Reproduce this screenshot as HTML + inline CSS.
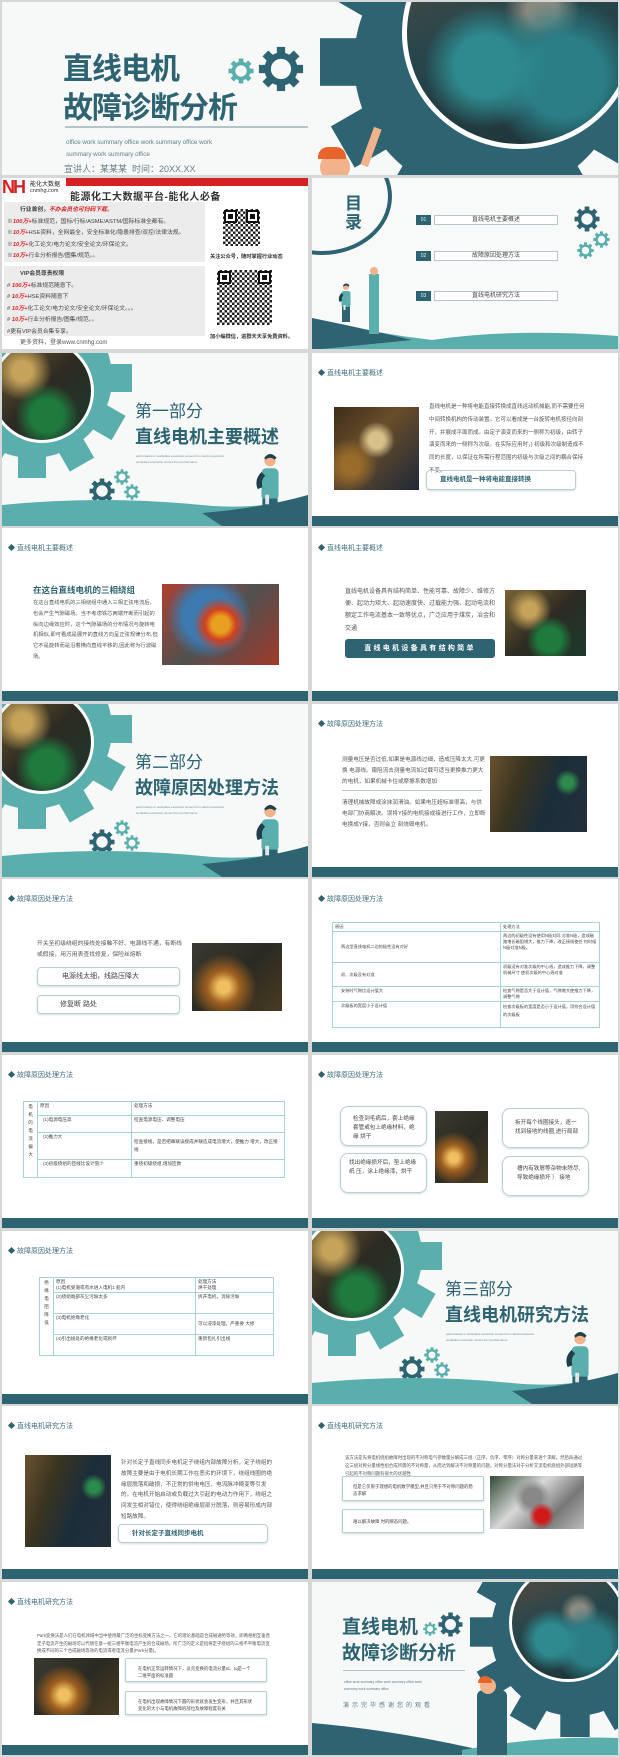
<!DOCTYPE html>
<html><head><meta charset="utf-8">
<style>
*{margin:0;padding:0;box-sizing:border-box}
body{width:620px;height:1757px;background:#d6d8d8;position:relative;overflow:hidden;font-family:"Liberation Sans","Noto Sans CJK SC",sans-serif;color:#444}
.s{position:absolute;width:306px;height:173px;background:#fff;overflow:hidden}
.L{left:2px}.R{left:312px}
.a{position:absolute}
.bar{position:absolute;left:0;right:0;bottom:0;height:10px;background:#2e6372}
.hd{position:absolute;left:7px;top:15px;font-size:7px;color:#3e6f7c}
.hd:before{content:"";display:inline-block;width:5px;height:5px;background:#2e6372;transform:rotate(45deg);margin-right:3px;vertical-align:0}
.t{position:absolute;font-size:5.6px;line-height:12px;color:#555}
.ph{position:absolute}
.btn{position:absolute;border:1px solid #b9cfd2;border-radius:4px;box-shadow:0 1px 2px #cfdcdd;font-size:7px;color:#444}
table{border-collapse:collapse;font-size:5px;color:#444}
td{border:1px solid #a9d3d6;vertical-align:top;padding:1px 2px}
.p1{background:radial-gradient(circle at 55% 75%,#1f7a3e 0 18%,transparent 35%),radial-gradient(circle at 30% 30%,#c6a35a 0 10%,transparent 30%),linear-gradient(135deg,#7a6433,#2c2a22 50%,#1c3a2d)}
.pteal{background:radial-gradient(circle at 35% 65%,#2e8a8f 0 15%,transparent 30%),radial-gradient(circle at 70% 70%,#2b7e86 0 18%,transparent 35%),radial-gradient(circle at 60% 40%,#8a8a80 0 8%,transparent 20%),linear-gradient(160deg,#5a4a3e,#27464c 45%,#1d3236)}
.pbar{background:radial-gradient(circle at 50% 40%,#d8c08a 0 12%,transparent 28%),radial-gradient(circle at 20% 70%,#9a6c2a 0 10%,transparent 30%),linear-gradient(135deg,#3b2d1a,#6a4e2a 40%,#1f2838)}
.pcopper{background:radial-gradient(circle at 80% 35%,#2c8a4c 0 6%,transparent 14%),linear-gradient(110deg,#6a5230,#3a3420 30%,#1c2d3a 60%,#22303a)}
.pspark{background:radial-gradient(circle at 35% 65%,#f0c060 0 8%,#a06020 22%,transparent 45%),linear-gradient(135deg,#3a3a30,#2a2a22 50%,#4a3a22)}
.pmotor{background:radial-gradient(circle at 50% 50%,#e8a020 0 12%,#d04020 22%,transparent 38%),radial-gradient(circle at 40% 40%,#3c7ab0 0 30%,transparent 50%),linear-gradient(135deg,#b04030,#505050 50%,#a03a2a)}
.pgear{background:radial-gradient(circle at 55% 75%,#d01a1a 0 10%,transparent 20%),radial-gradient(circle at 45% 40%,#888 0 15%,transparent 30%),linear-gradient(135deg,#2f4a34,#d8d8d8 40%,#777 70%,#bbb)}
.qr{position:absolute;background:repeating-conic-gradient(#222 0 25%,#fff 0 50%) 0 0/5px 5px,#fff}
.qr:before,.qr:after{content:"";position:absolute;width:9px;height:9px;border:2px solid #111;background:#fff;box-shadow:inset 0 0 0 2px #fff,inset 0 0 0 5px #111;top:1px;left:1px}
.qr:after{left:auto;right:1px}
.red{color:#d81e1e;font-weight:bold;font-style:italic}
</style></head><body>
<svg width="0" height="0" style="position:absolute">
<defs>
<symbol id="g" viewBox="-50 -50 100 100"><circle r="29" fill="none" stroke="currentColor" stroke-width="14"/><g fill="currentColor"><rect x="-9" y="-48" width="18" height="14"/><rect x="-9" y="-48" width="18" height="14" transform="rotate(45)"/><rect x="-9" y="-48" width="18" height="14" transform="rotate(90)"/><rect x="-9" y="-48" width="18" height="14" transform="rotate(135)"/><rect x="-9" y="-48" width="18" height="14" transform="rotate(180)"/><rect x="-9" y="-48" width="18" height="14" transform="rotate(225)"/><rect x="-9" y="-48" width="18" height="14" transform="rotate(270)"/><rect x="-9" y="-48" width="18" height="14" transform="rotate(315)"/></g></symbol>
<symbol id="G" viewBox="-50 -50 100 100"><circle r="40" fill="currentColor"/><g fill="currentColor"><rect x="-7" y="-50" width="14" height="14"/><rect x="-7" y="-50" width="14" height="14" transform="rotate(30)"/><rect x="-7" y="-50" width="14" height="14" transform="rotate(60)"/><rect x="-7" y="-50" width="14" height="14" transform="rotate(90)"/><rect x="-7" y="-50" width="14" height="14" transform="rotate(120)"/><rect x="-7" y="-50" width="14" height="14" transform="rotate(150)"/><rect x="-7" y="-50" width="14" height="14" transform="rotate(180)"/><rect x="-7" y="-50" width="14" height="14" transform="rotate(210)"/><rect x="-7" y="-50" width="14" height="14" transform="rotate(240)"/><rect x="-7" y="-50" width="14" height="14" transform="rotate(270)"/><rect x="-7" y="-50" width="14" height="14" transform="rotate(300)"/><rect x="-7" y="-50" width="14" height="14" transform="rotate(330)"/></g></symbol>
<symbol id="man" viewBox="0 0 40 80"><circle cx="20" cy="8" r="6" fill="#f2b28a"/><path d="M14 5 q6-8 13 0 l-2 2 q-5-4-10 0z" fill="#1f3f4a"/><rect x="11" y="16" width="18" height="34" rx="5" fill="#5aafad"/><path d="M11 20 q-8 8-4 18 l5-2 q-2-8 3-12z" fill="#1f3f4a"/><rect x="12" y="48" width="16" height="30" fill="#2e6372"/><rect x="15" y="44" width="4" height="10" fill="#e7e7e7"/></symbol>
</defs></svg>

<!-- TOP TITLE SLIDE -->
<div class="s" style="left:2px;top:2px;width:616px;height:173px;background:#f7f9f9">
 <svg class="a" style="left:318px;top:-110px" width="340" height="340"><use href="#G" width="340" height="340" color="#2e6372"/></svg>
 <div class="a pteal" style="left:400px;top:-85px;width:235px;height:232px;border-radius:50%;border:5px solid #fff"></div>
 <div class="a" style="left:61px;top:42px;font-size:30px;font-weight:bold;color:#2e6372;letter-spacing:-1px">直线电机</div>
 <svg class="a" style="left:226px;top:56px" width="26" height="26"><use href="#g" width="26" height="26" color="#5aafad"/></svg>
 <svg class="a" style="left:256px;top:44px" width="46" height="46"><use href="#g" width="46" height="46" color="#2e6372"/></svg>
 <div class="a" style="left:61px;top:81px;font-size:30px;font-weight:bold;color:#2e6372;letter-spacing:-1px">故障诊断分析</div>
 <div class="a" style="left:63px;top:124px;width:243px;height:2px;background:#b5c4c8"></div>
 <div class="a" style="left:64px;top:135px;font-size:6.2px;line-height:12px;color:#5d7f88;width:240px">office work summary office work summary office work<br>summary work summary office</div>
 <div class="a" style="left:62px;top:160px;font-size:9px;color:#6a7f86">宣讲人：某某某&nbsp;&nbsp;时间：20XX.XX</div>
 <div class="a" style="left:318px;top:150px;width:30px;height:30px;border-radius:50%;background:#f2b28a"></div>
 <div class="a" style="left:316px;top:145px;width:28px;height:12px;border-radius:10px 10px 0 0;background:#e8642a"></div>
 <div class="a" style="left:365px;top:125px;width:8px;height:40px;background:#f2b28a;transform:rotate(20deg)"></div>
</div>

<!-- ROW 2 LEFT: AD -->
<div class="s L" style="top:178px;height:171px">
 <div class="a" style="left:64px;top:0;right:0;height:8px;background:#d42121"></div>
 <div class="a" style="left:0;top:0;width:24px;height:19px;color:#d42121;font-weight:bold;font-size:18px;line-height:19px;letter-spacing:-2px">NH</div>
 <div class="a" style="left:28px;top:1px;font-size:6px;color:#222">能化大数据</div>
 <div class="a" style="left:28px;top:10px;font-size:5.5px;color:#333">cnmhg.com</div>
 <div class="a" style="left:68px;top:10px;font-size:10px;font-weight:bold;color:#333;letter-spacing:.5px">能源化工大数据平台-能化人必备</div>
 <div class="a" style="left:2px;top:24px;width:201px;height:60px;background:#ececec;font-size:5.8px;line-height:11.5px;padding:3px 3px;color:#444">
  <div style="padding-left:13px;font-weight:bold">行业首创，<span class="red">不办会员也可扫码下载。</span></div>
  <div>※<span class="red">100万+</span>标准规范，国标/行标/ASME/ASTM/国际标准全都有。</div>
  <div>※<span class="red">10万+</span>HSE资料，全网最全，安全标准化/隐患排查/双控/法律法规。</div>
  <div>※<span class="red">10万+</span>化工论文/电力论文/安全论文/环保论文。</div>
  <div>※<span class="red">10万+</span>行业分析报告/图集/规范。。</div>
 </div>
 <div class="a" style="left:2px;top:88px;width:201px;height:70px;background:#ececec;font-size:5.8px;line-height:11.5px;padding:3px 3px;color:#444">
  <div style="padding-left:13px;font-weight:bold">VIP会员尊贵权限</div>
  <div># <span class="red">100万+</span>标准规范随意下。</div>
  <div># <span class="red">10万+</span>HSE资料随意下</div>
  <div># <span class="red">10万+</span>化工论文/电力论文/安全论文/环保论文。。。</div>
  <div># <span class="red">10万+</span>行业分析报告/图集/规范。。</div>
  <div>#更有VIP会员合集专享。</div>
 </div>
 <div class="a" style="left:18px;top:159px;font-size:6px;color:#555">更多资料，登录www.cnmhg.com</div>
 <div class="qr" style="left:221px;top:31px;width:37px;height:37px"></div>
 <div class="a" style="left:208px;top:75px;font-size:5.2px;font-weight:bold;color:#333">关注公众号，随时掌握行业动态</div>
 <div class="qr" style="left:215px;top:92px;width:55px;height:55px"></div>
 <div class="a" style="left:208px;top:155px;font-size:5.2px;font-weight:bold;color:#333">加小编微信，进群天天享免费资料。</div>
</div>

<!-- ROW 2 RIGHT: TOC -->
<div class="s R" style="top:178px;height:171px;background:#f8fafa">
 <div class="a" style="left:-60px;top:-40px;width:140px;height:117px;border-radius:50%;border:4px solid #2e6372"></div>
 <div class="a" style="left:33px;top:16px;font-size:17px;font-weight:bold;color:#2e6372;line-height:19px;width:20px">目录</div>
 <div class="a" style="left:104px;top:37px;width:15px;height:10px;background:#2e6372;color:#cfe;font-size:5px;text-align:center;line-height:10px">01</div>
 <div class="a" style="left:122px;top:37px;width:124px;height:10px;border:1px solid #b5c4c8;background:#fff;font-size:6px;text-align:center;line-height:9px">直线电机主要概述</div>
 <div class="a" style="left:104px;top:73px;width:15px;height:10px;background:#2e6372;color:#cfe;font-size:5px;text-align:center;line-height:10px">02</div>
 <div class="a" style="left:122px;top:73px;width:124px;height:10px;border:1px solid #b5c4c8;background:#fff;font-size:6px;text-align:center;line-height:9px">故障原因处理方法</div>
 <div class="a" style="left:104px;top:113px;width:15px;height:10px;background:#2e6372;color:#cfe;font-size:5px;text-align:center;line-height:10px">03</div>
 <div class="a" style="left:122px;top:113px;width:124px;height:10px;border:1px solid #b5c4c8;background:#fff;font-size:6px;text-align:center;line-height:9px">直线电机研究方法</div>
 <svg class="a" style="left:262px;top:28px" width="26" height="26"><use href="#g" width="26" height="26" color="#2e6372"/></svg>
 <svg class="a" style="left:281px;top:53px" width="17" height="17"><use href="#g" width="17" height="17" color="#5aafad"/></svg>
 <svg class="a" style="left:265px;top:64px" width="17" height="17"><use href="#g" width="17" height="17" color="#5aafad"/></svg>
 <svg class="a" style="left:0;top:130px" width="306" height="42"><path d="M0 10 Q60 25 120 32 Q200 20 306 28 V42 H0Z" fill="#5aafad"/><path d="M0 10 Q50 20 100 32 L0 42Z" fill="#2e6372"/></svg>
 <svg class="a" style="left:24px;top:90px" width="20" height="70"><use href="#man" width="20" height="70"/></svg>
 <svg class="a" style="left:50px;top:88px" width="24" height="72"><rect x="7" y="8" width="10" height="60" fill="#5aafad"/><circle cx="12" cy="5" r="4" fill="#f2b28a"/></svg>
</div>

<!-- ROW3 LEFT section 1 -->
<div class="s L" style="top:353px;background:#f7f9f9">
 <svg class="a" style="left:-70px;top:-75px" width="200" height="200"><use href="#G" width="200" height="200" color="#5aafad"/></svg>
 <div class="a p1" style="left:-12px;top:-14px;width:104px;height:104px;border-radius:50%;border:3px solid #fff"></div>
 <div class="a" style="left:133px;top:44px;font-size:17px;color:#2e6372">第一部分</div>
 <div class="a" style="left:133px;top:70px;font-size:18px;font-weight:bold;color:#2e6372">直线电机主要概述</div>
 <div class="a" style="left:134px;top:100px;font-size:3px;line-height:6px;color:#6a8a92">performance in workplace execution comes from careful execution<br>workplace execution comes from performance</div>
 <svg class="a" style="left:87px;top:125px" width="26" height="26"><use href="#g" width="26" height="26" color="#2e6372"/></svg>
 <svg class="a" style="left:112px;top:116px" width="16" height="16"><use href="#g" width="16" height="16" color="#5aafad"/></svg>
 <svg class="a" style="left:122px;top:131px" width="16" height="16"><use href="#g" width="16" height="16" color="#5aafad"/></svg>
 <svg class="a" style="left:0;top:140px" width="306" height="33"><path d="M0 12 Q100 2 200 12 Q260 18 306 2 V33 H0Z" fill="#5aafad"/><path d="M200 20 Q260 15 306 2 V33 H220Z" fill="#2e6372"/></svg>
 <svg class="a" style="left:248px;top:100px" width="40" height="76"><use href="#man" width="40" height="76"/></svg>
</div>

<!-- ROW3 RIGHT -->
<div class="s R" style="top:353px">
 <div class="hd">直线电机主要概述</div>
 <div class="ph pbar" style="left:22px;top:54px;width:85px;height:83px"></div>
 <div class="t" style="left:117px;top:48px;width:158px;line-height:12.8px;font-size:5.5px">直线电机是一种将电能直接转换成直线运动机械能,而不需要任何中间转换机构的传动装置。它可以看成是一台旋转电机按径向剖开，并展成平面而成。由定子演变而来的一侧称为初级，由转子演变而来的一侧称为次级。在实际应用时，) 初级和次级制造成不同的长度，以保证在所需行程范围内初级与次级之间的耦合保持不变。</div>
 <div class="btn" style="left:114px;top:117px;width:150px;height:20px;font-weight:bold;color:#2e6372;font-size:6.5px;line-height:18px;padding-left:13px">直线电机是一种将电能直接转换</div>
 <div class="bar"></div>
</div>

<!-- ROW4 LEFT -->
<div class="s L" style="top:528px">
 <div class="hd">直线电机主要概述</div>
 <div class="a" style="left:31px;top:56px;font-size:8.5px;font-weight:bold;color:#2e6372">在这台直线电机的三相绕组</div>
 <div class="t" style="left:31px;top:70px;width:125px;line-height:10.8px;font-size:5.3px">在这台直线电机的三相绕组中通入三相正弦电流后，也会产生气隙磁场。当不考虑铁芯两端开断而引起的纵向边缘效应时，这个气隙磁场的分布情况与旋转电机相似,即可看成是展开的直线方向呈正弦规律分布,但它不是旋转而是沿着横向直线平移的,因此称为行波磁场。</div>
 <div class="ph pmotor" style="left:160px;top:56px;width:117px;height:81px"></div>
 <div class="bar"></div>
</div>
<!-- ROW4 RIGHT -->
<div class="s R" style="top:528px">
 <div class="hd">直线电机主要概述</div>
 <div class="t" style="left:33px;top:58px;width:155px;line-height:12.2px;font-size:6px">直线电机设备具有结构简单、性能可靠、故障少、维修方便、起动力矩大、起动速度快、过载能力强、起动电流和额定工作电流基本一致等优点，广泛应用于煤炭，冶金和交通</div>
 <div class="a" style="left:33px;top:111px;width:150px;height:19px;background:#2e6372;border-radius:3px;color:#fff;font-size:7px;font-weight:bold;letter-spacing:2.3px;line-height:19px;text-align:center">直线电机设备具有结构简单</div>
 <div class="ph p1" style="left:193px;top:62px;width:81px;height:66px"></div>
 <div class="bar"></div>
</div>

<!-- ROW5 LEFT section 2 -->
<div class="s L" style="top:704px;background:#f7f9f9">
 <svg class="a" style="left:-70px;top:-75px" width="200" height="200"><use href="#G" width="200" height="200" color="#5aafad"/></svg>
 <div class="a p1" style="left:-12px;top:-14px;width:104px;height:104px;border-radius:50%;border:3px solid #fff"></div>
 <div class="a" style="left:133px;top:44px;font-size:17px;color:#2e6372">第二部分</div>
 <div class="a" style="left:133px;top:70px;font-size:18px;font-weight:bold;color:#2e6372">故障原因处理方法</div>
 <div class="a" style="left:134px;top:100px;font-size:3px;line-height:6px;color:#6a8a92">performance in workplace execution comes from careful execution<br>workplace execution comes from performance</div>
 <svg class="a" style="left:87px;top:125px" width="26" height="26"><use href="#g" width="26" height="26" color="#2e6372"/></svg>
 <svg class="a" style="left:112px;top:116px" width="16" height="16"><use href="#g" width="16" height="16" color="#5aafad"/></svg>
 <svg class="a" style="left:122px;top:131px" width="16" height="16"><use href="#g" width="16" height="16" color="#5aafad"/></svg>
 <svg class="a" style="left:0;top:140px" width="306" height="33"><path d="M0 12 Q100 2 200 12 Q260 18 306 2 V33 H0Z" fill="#5aafad"/><path d="M200 20 Q260 15 306 2 V33 H220Z" fill="#2e6372"/></svg>
 <svg class="a" style="left:248px;top:100px" width="40" height="76"><use href="#man" width="40" height="76"/></svg>
</div>
<!-- ROW5 RIGHT -->
<div class="s R" style="top:704px">
 <div class="hd">故障原因处理方法</div>
 <div class="t" style="left:30px;top:51px;width:145px;line-height:11px;font-size:5.6px">测量电压是否过低,如果是电源线过细，造成压降太大,可更换 电源线。甭阻流去测量电流如过载可适当更换推力更大的电机，如果机械卡住或摩擦系数增加</div>
 <div class="a" style="left:30px;top:86px;width:140px;height:1px;background:#b5c4c8"></div>
 <div class="t" style="left:30px;top:94px;width:145px;line-height:11px;font-size:5.6px">清理机械故障或涂抹润滑油。如果电压超标准很高，与供电部门协商解决。误将Y接的电机接成接进行工作，立即断电换成Y接，否则会立 刻烧毁电机。</div>
 <div class="ph pcopper" style="left:178px;top:52px;width:97px;height:76px"></div>
 <div class="bar"></div>
</div>

<!-- ROW6 LEFT -->
<div class="s L" style="top:879px">
 <div class="hd">故障原因处理方法</div>
 <div class="t" style="left:35px;top:60px;width:150px;line-height:11px;font-size:5.8px">开关至初级绕组的接线处接触不好、电源线不通，有断线或假接，用万用表查找修复，保险丝熔断</div>
 <div class="btn" style="left:35px;top:88px;width:143px;height:19px;line-height:17px;padding-left:24px">电源线太细，线路压降大</div>
 <div class="btn" style="left:35px;top:116px;width:143px;height:19px;line-height:17px;padding-left:22px">修复断 路处</div>
 <div class="ph pspark" style="left:190px;top:64px;width:90px;height:68px"></div>
 <div class="bar"></div>
</div>
<!-- ROW6 RIGHT -->
<div class="s R" style="top:879px">
 <div class="hd">故障原因处理方法</div>
 <table class="a" style="left:20px;top:43px;width:268px;font-size:4.2px">
  <tr><td style="width:168px">原因</td><td>处理方法</td></tr>
  <tr><td style="height:31px;vertical-align:middle;padding-left:8px">两边型直线电机二边的极性没有对好</td><td>两边的初级性没有使用N极对同 对准N极，造成磁路增长磁阻增大，推力下降，改正接线使任 何时候N极对准N极。</td></tr>
  <tr><td style="height:24px;vertical-align:middle;padding-left:8px">初、次级没有对准</td><td>初级没有对准次级的中心线，造成推力下降，调整机械尺寸 使初次级的中心线对准</td></tr>
  <tr><td style="height:15px;padding-left:8px">安装时气隙比设计值大</td><td>检查气隙是否大于设计值，气隙增大使推力下降，调整气隙</td></tr>
  <tr><td style="height:26px;padding-left:8px">次级板的宽度小于设计值</td><td style="line-height:8px">检查次级板的宽度是否小于设计值，用符合设计值的次级板</td></tr>
 </table>
 <div class="bar"></div>
</div>

<!-- ROW7 LEFT -->
<div class="s L" style="top:1055px">
 <div class="hd">故障原因处理方法</div>
 <table class="a" style="left:21px;top:46px;width:262px;font-size:4.6px">
  <tr><td rowspan="5" style="width:14px;line-height:8px;text-align:center">电机的电流偏大</td><td style="width:94px;height:14px">原因</td><td>处理方法</td></tr>
  <tr><td style="height:17px;padding-left:5px">(1)电源电压高</td><td>检查电源电压、调整电压</td></tr>
  <tr><td style="height:27px;padding-left:5px">(2)推力大</td><td style="line-height:8px;padding-top:5px">检查接线，是否把串联误接成并联造成电流增大，使推力 增大，改正接线</td></tr>
  <tr><td style="height:18px;padding-left:5px">(3)初级绕组的匝线比设计值少</td><td>重绕初级绕组,增加匝数</td></tr>
 </table>
 <div class="bar"></div>
</div>
<!-- ROW7 RIGHT -->
<div class="s R" style="top:1055px">
 <div class="hd">故障原因处理方法</div>
 <div class="btn" style="left:28px;top:51px;width:87px;height:40px;border-radius:8px;font-size:5.6px;line-height:9px;padding:8px 6px 0 12px">检查到毛病后，套上绝缘套管或包上绝缘材料，绝缘 烘干</div>
 <div class="btn" style="left:28px;top:98px;width:87px;height:40px;border-radius:8px;font-size:5.6px;line-height:9px;padding:5px 6px 0 8px">找出绝缘损坏后，垫上绝缘纸 压，涂上绝缘漆，烘干</div>
 <div class="ph pspark" style="left:123px;top:56px;width:53px;height:72px"></div>
 <div class="btn" style="left:190px;top:53px;width:87px;height:40px;border-radius:8px;font-size:5.6px;line-height:9px;padding:10px 6px 0 12px">拆开每个线圈接头，逐一找到接地的线圈,进行局部</div>
 <div class="btn" style="left:190px;top:101px;width:87px;height:40px;border-radius:8px;font-size:5.6px;line-height:9px;padding:8px 6px 0 14px">槽内有铁屑等杂物未除尽,导致绝缘损坏 ｝ 接地</div>
 <div class="bar"></div>
</div>

<!-- ROW8 LEFT -->
<div class="s L" style="top:1231px">
 <div class="hd">故障原因处理方法</div>
 <table class="a" style="left:37px;top:46px;width:235px;font-size:4.6px">
  <tr><td rowspan="5" style="width:14px;line-height:8px;text-align:center">绝缘电阻降低</td><td style="width:142px;height:10px">原因<br>(1)电机受潮或有水进入电机1 船内</td><td>处理方法<br>烘干处理</td></tr>
  <tr><td style="height:21px">(2)绕组端部灰尘污垢太多</td><td>拆开电机，消除污垢</td></tr>
  <tr><td style="height:21px">(3)电机绝缘老化</td><td style="padding-top:7px">可以浸漆处理，严重要 大修</td></tr>
  <tr><td style="height:21px">(4)引出线处的绝缘老化或损坏</td><td>重新包扎引出线</td></tr>
 </table>
 <div class="bar"></div>
</div>
<!-- ROW8 RIGHT section 3 -->
<div class="s R" style="top:1231px;background:#f7f9f9">
 <svg class="a" style="left:-70px;top:-75px" width="200" height="200"><use href="#G" width="200" height="200" color="#5aafad"/></svg>
 <div class="a p1" style="left:-12px;top:-14px;width:104px;height:104px;border-radius:50%;border:3px solid #fff"></div>
 <div class="a" style="left:133px;top:44px;font-size:17px;color:#2e6372">第三部分</div>
 <div class="a" style="left:133px;top:70px;font-size:18px;font-weight:bold;color:#2e6372">直线电机研究方法</div>
 <div class="a" style="left:134px;top:100px;font-size:3px;line-height:6px;color:#6a8a92">performance in workplace execution comes from careful execution<br>workplace execution comes from performance</div>
 <svg class="a" style="left:87px;top:125px" width="26" height="26"><use href="#g" width="26" height="26" color="#2e6372"/></svg>
 <svg class="a" style="left:112px;top:116px" width="16" height="16"><use href="#g" width="16" height="16" color="#5aafad"/></svg>
 <svg class="a" style="left:122px;top:131px" width="16" height="16"><use href="#g" width="16" height="16" color="#5aafad"/></svg>
 <svg class="a" style="left:0;top:140px" width="306" height="33"><path d="M0 12 Q100 2 200 12 Q260 18 306 2 V33 H0Z" fill="#5aafad"/><path d="M200 20 Q260 15 306 2 V33 H220Z" fill="#2e6372"/></svg>
 <svg class="a" style="left:248px;top:100px" width="40" height="76"><use href="#man" width="40" height="76"/></svg>
</div>

<!-- ROW9 LEFT -->
<div class="s L" style="top:1406px">
 <div class="hd">直线电机研究方法</div>
 <div class="ph pcopper" style="left:23px;top:49px;width:86px;height:92px"></div>
 <div class="t" style="left:119px;top:52px;width:156px;line-height:10.8px;font-size:5.6px">针对长定子直线同步电机定子绕组内部故障分析，定子绕组的故障主要是由于电机长期工作在恶劣的环境下，绕组线圈的绝缘层脱落和破损，不正常的供电电压、电流脉冲畸变等引发的。在电机开始启动或负载过大引起的电动力作用下，绕组之间发生相对错位，使得绕组绝缘层部分脱落，则容易形成内部短路故障。</div>
 <div class="btn" style="left:116px;top:118px;width:150px;height:19px;font-weight:bold;color:#2e6372;font-size:6.5px;line-height:17px;padding-left:13px">针对长定子直线同步电机</div>
 <div class="bar"></div>
</div>
<!-- ROW9 RIGHT -->
<div class="s R" style="top:1406px">
 <div class="hd">直线电机研究方法</div>
 <div class="t" style="left:33px;top:48px;width:240px;line-height:8px;font-size:4.4px">该方法是先将电机绕组故障时出现的不对称电气参数量分解成三组（正序、负序、零序）对称分量来逐个求解。然后再通过这三组对称分量线性组合成所需的不对称量，从而达到解决不对称量的问题。对称分量法对于分析交流电机绕组外部短路等引起的不对称问题有很大的优越性</div>
 <div class="btn" style="left:30px;top:70px;width:142px;height:25px;border-radius:1px;font-size:4.4px;line-height:7px;padding:6px 10px">但是它仅限于理想的电机数学模型,并且只用于不对称问题的稳态求解</div>
 <div class="btn" style="left:30px;top:103px;width:142px;height:24px;border-radius:1px;font-size:4.4px;line-height:24px;padding-left:10px">难以解决故障 时的瞬态问题。</div>
 <div class="ph pgear" style="left:178px;top:70px;width:94px;height:53px"></div>
 <div class="bar"></div>
</div>

<!-- ROW10 LEFT -->
<div class="s L" style="top:1582px">
 <div class="hd">直线电机研究方法</div>
 <div class="t" style="left:35px;top:50px;width:235px;line-height:7.5px;font-size:4.4px">Park变换法是人们在电机领域中当中使用最广泛的坐标变换方法之一。它的理论基础是合成磁通势等效，即两相相互垂直定子电流产生的磁场可以代替任意一组三相平衡电流产生的合成磁场。所广泛的定义是指将定子绕组的三相不平衡电流变换成不同的三个合成磁场等效的电流或者电流分量(Park分量)。</div>
 <div class="ph pspark" style="left:32px;top:76px;width:85px;height:57px"></div>
 <div class="btn" style="left:123px;top:76px;width:142px;height:24px;border-radius:1px;font-size:4.4px;line-height:7px;padding:6px 12px">在电机正常运转情况下，派克变换的电流分量Id、Iq是一个二维平面的标准圆</div>
 <div class="btn" style="left:123px;top:109px;width:142px;height:24px;border-radius:1px;font-size:4.4px;line-height:7px;padding:6px 12px">在电机出现故障情况下圆的形状就会发生变形，并且其形状变化的大小与电机故障的部位及故障程度有关</div>
 <div class="bar"></div>
</div>
<!-- ROW10 RIGHT -->
<div class="s R" style="top:1582px;background:#f7f9f9">
 <svg class="a" style="left:158px;top:-55px" width="210" height="210"><use href="#G" width="210" height="210" color="#2e6372"/></svg>
 <div class="a pteal" style="left:197px;top:-18px;width:118px;height:118px;border-radius:50%;border:3px solid #fff"></div>
 <div class="a" style="left:30px;top:30px;font-size:19px;font-weight:bold;color:#2e6372">直线电机</div>
 <svg class="a" style="left:111px;top:40px" width="14" height="14"><use href="#g" width="14" height="14" color="#5aafad"/></svg>
 <svg class="a" style="left:126px;top:30px" width="25" height="25"><use href="#g" width="25" height="25" color="#2e6372"/></svg>
 <div class="a" style="left:30px;top:56px;font-size:19px;font-weight:bold;color:#2e6372">故障诊断分析</div>
 <div class="a" style="left:31px;top:88px;width:122px;height:1px;background:#b5c4c8"></div>
 <div class="a" style="left:32px;top:97px;font-size:3.3px;line-height:7px;color:#5d7f88">office work summary office work summary office work<br>summary work summary office</div>
 <div class="a" style="left:31px;top:118px;font-size:6px;letter-spacing:3px;color:#5d7f88">演示完毕感谢您的观看</div>
 <svg class="a" style="left:0;top:138px" width="306" height="35"><path d="M0 3 Q80 10 160 28 L160 35 H0Z" fill="#2e6372"/><path d="M150 30 Q230 15 306 18 V35 H150Z" fill="#5aafad"/></svg>
 <div class="a" style="left:165px;top:108px;width:30px;height:65px;background:#2e6372;border-radius:6px 6px 0 0"></div>
 <div class="a" style="left:168px;top:96px;width:16px;height:16px;border-radius:50%;background:#f2b28a"></div>
 <div class="a" style="left:166px;top:94px;width:14px;height:7px;border-radius:7px 7px 0 0;background:#e8642a"></div>
</div>
</body></html>
